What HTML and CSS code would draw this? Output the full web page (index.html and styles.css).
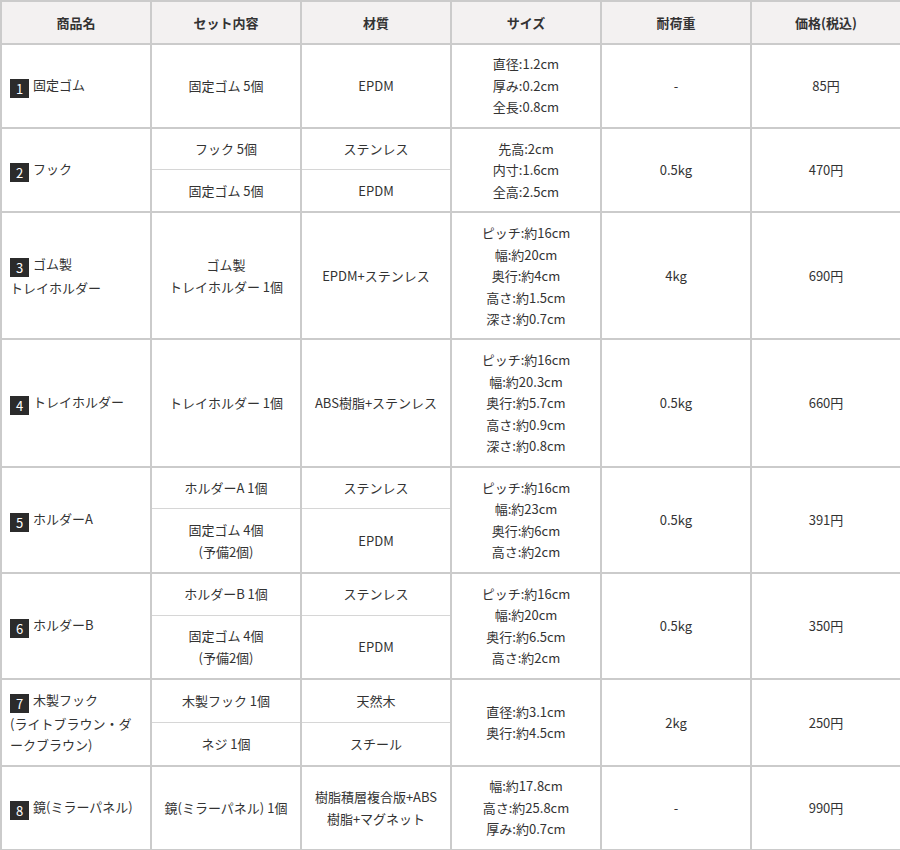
FILE: index.html
```html
<!DOCTYPE html>
<html lang="ja">
<head>
<meta charset="utf-8">
<link rel="stylesheet" href="styles.css">
</head>
<body>
<table class="spec">
  <colgroup><col><col><col><col><col><col></colgroup>
  <thead>
    <tr><th>商品名</th><th>セット内容</th><th>材質</th><th>サイズ</th><th>耐荷重</th><th>価格(税込)</th></tr>
  </thead>
  <tbody>
    <tr>
      <td class="name"><span class="num">1</span>固定ゴム</td>
      <td>固定ゴム 5個</td>
      <td>EPDM</td>
      <td>直径:1.2cm<br>厚み:0.2cm<br>全長:0.8cm</td>
      <td>-</td>
      <td>85円</td>
    </tr>
    <tr>
      <td class="name" rowspan="2"><span class="num">2</span>フック</td>
      <td class="sub-a">フック 5個</td>
      <td class="sub-a">ステンレス</td>
      <td rowspan="2">先高:2cm<br>内寸:1.6cm<br>全高:2.5cm</td>
      <td rowspan="2">0.5kg</td>
      <td rowspan="2">470円</td>
    </tr>
    <tr>
      <td class="sub-b">固定ゴム 5個</td>
      <td class="sub-b">EPDM</td>
    </tr>
    <tr>
      <td class="name"><span class="num">3</span>ゴム製<br>トレイホルダー</td>
      <td>ゴム製<br>トレイホルダー 1個</td>
      <td>EPDM+ステンレス</td>
      <td>ピッチ:約16cm<br>幅:約20cm<br>奥行:約4cm<br>高さ:約1.5cm<br>深さ:約0.7cm</td>
      <td>4kg</td>
      <td>690円</td>
    </tr>
    <tr>
      <td class="name"><span class="num">4</span>トレイホルダー</td>
      <td>トレイホルダー 1個</td>
      <td>ABS樹脂+ステンレス</td>
      <td>ピッチ:約16cm<br>幅:約20.3cm<br>奥行:約5.7cm<br>高さ:約0.9cm<br>深さ:約0.8cm</td>
      <td>0.5kg</td>
      <td>660円</td>
    </tr>
    <tr>
      <td class="name" rowspan="2"><span class="num">5</span>ホルダーA</td>
      <td class="sub-a">ホルダーA 1個</td>
      <td class="sub-a">ステンレス</td>
      <td rowspan="2">ピッチ:約16cm<br>幅:約23cm<br>奥行:約6cm<br>高さ:約2cm</td>
      <td rowspan="2">0.5kg</td>
      <td rowspan="2">391円</td>
    </tr>
    <tr>
      <td class="sub-b">固定ゴム 4個<br>(予備2個)</td>
      <td class="sub-b">EPDM</td>
    </tr>
    <tr>
      <td class="name" rowspan="2"><span class="num">6</span>ホルダーB</td>
      <td class="sub-a">ホルダーB 1個</td>
      <td class="sub-a">ステンレス</td>
      <td rowspan="2">ピッチ:約16cm<br>幅:約20cm<br>奥行:約6.5cm<br>高さ:約2cm</td>
      <td rowspan="2">0.5kg</td>
      <td rowspan="2">350円</td>
    </tr>
    <tr>
      <td class="sub-b">固定ゴム 4個<br>(予備2個)</td>
      <td class="sub-b">EPDM</td>
    </tr>
    <tr>
      <td class="name" rowspan="2"><span class="num">7</span>木製フック<br>(ライトブラウン・ダークブラウン)</td>
      <td class="sub-a">木製フック 1個</td>
      <td class="sub-a">天然木</td>
      <td rowspan="2">直径:約3.1cm<br>奥行:約4.5cm</td>
      <td rowspan="2">2kg</td>
      <td rowspan="2">250円</td>
    </tr>
    <tr>
      <td class="sub-b">ネジ 1個</td>
      <td class="sub-b">スチール</td>
    </tr>
    <tr>
      <td class="name"><span class="num">8</span>鏡(ミラーパネル)</td>
      <td>鏡(ミラーパネル) 1個</td>
      <td>樹脂積層複合版+ABS樹脂+マグネット</td>
      <td>幅:約17.8cm<br>高さ:約25.8cm<br>厚み:約0.7cm</td>
      <td>-</td>
      <td>990円</td>
    </tr>
  </tbody>
</table>
</body>
</html>
```

FILE: styles.css
```css
html, body {
  margin: 0;
  padding: 0;
  background: #fff;
}

.spec {
  width: 900px;
  table-layout: fixed;
  border-collapse: collapse;
  font-family: "Noto Sans CJK JP", "Noto Sans", sans-serif;
  font-size: 13px;
  line-height: 21.5px;
  color: #333;
}

.spec col {
  width: 150px;
}

.spec th,
.spec td {
  border: 2px solid #cbcbcb;
  padding: 8.8px 10px;
  text-align: center;
  vertical-align: middle;
}

.spec th {
  background: #f3f1f1;
  font-weight: bold;
  padding: 9.5px 10px;
}

.spec td.name {
  text-align: left;
  padding-left: 8px;
  padding-right: 10px;
}

.spec td.sub-a {
  padding: 9.7px 10px;
  border-bottom: 1px solid #d6d6d6;
}

.spec td.sub-b {
  padding: 9.7px 10px;
  border-top: 1px solid #d6d6d6;
}

.num {
  display: inline-block;
  width: 19px;
  height: 19px;
  line-height: 19px;
  margin-right: 4px;
  background: #2b2b2b;
  color: #fff;
  text-align: center;
  vertical-align: -4px;
  font-size: 13px;
}
```
